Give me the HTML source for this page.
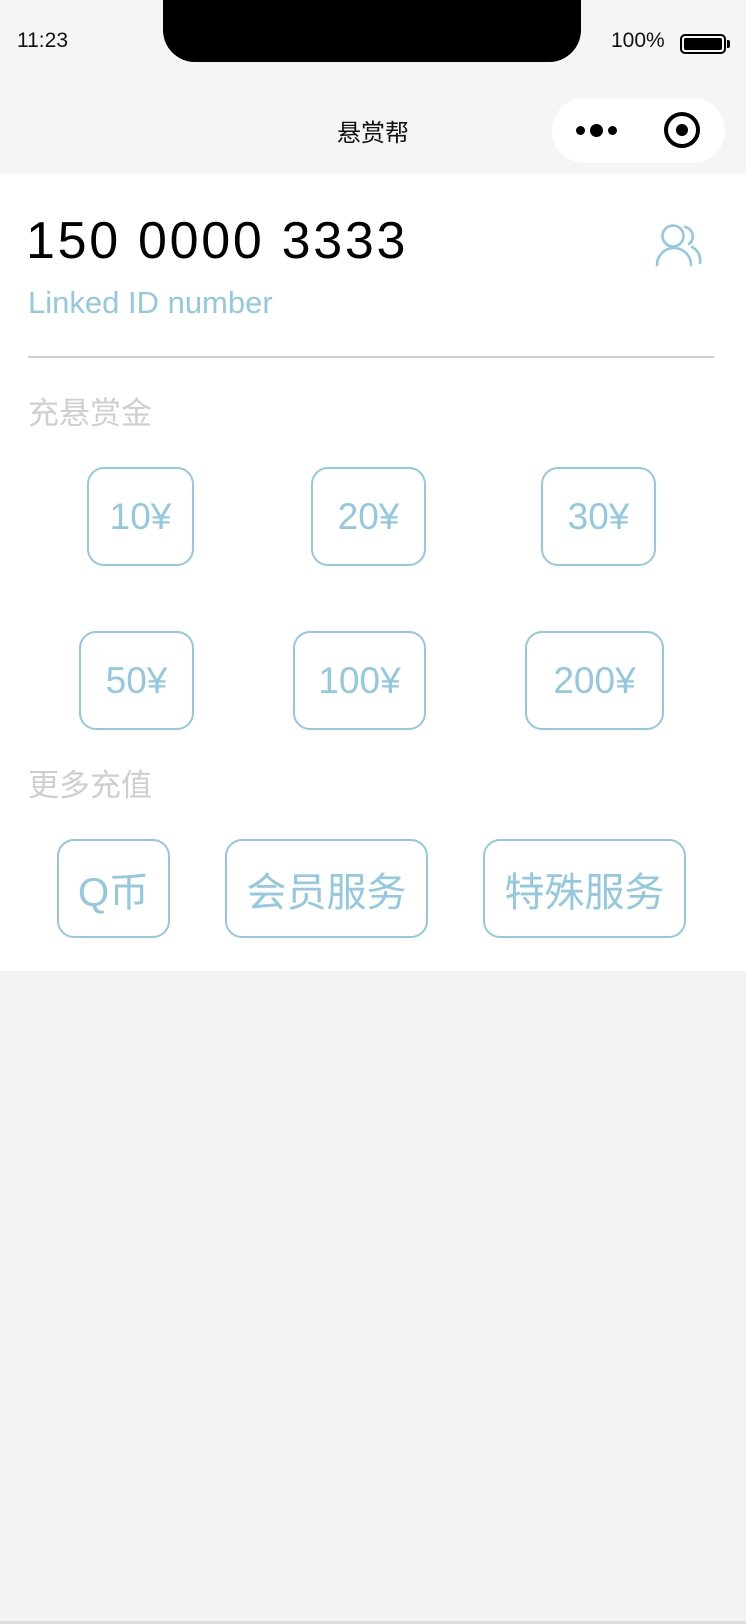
<!DOCTYPE html>
<html><head><meta charset="utf-8"><style>
*{margin:0;padding:0;box-sizing:border-box}
body{width:746px;height:1624px;background:#f3f3f3;font-family:"Liberation Sans","Noto Sans CJK SC",sans-serif;position:relative;overflow:hidden}
.top{position:absolute;left:0;top:0;width:746px;height:174px;background:#f5f5f5}
.notch{position:absolute;left:163px;top:0;width:418px;height:62px;background:#000;border-radius:0 0 32px 32px}
.abs{position:absolute}
.panel{position:absolute;left:0;top:174px;width:746px;height:797px;background:#fff}
.btn{position:absolute;border:2px solid #93c8de;border-radius:17px;color:#93c8de;display:flex;align-items:center;justify-content:center;font-size:37px}
.cj{font-size:40px}
.lbl{position:absolute;left:28px;font-size:31px;color:#cfcfcf;line-height:1}
</style></head><body>
<div class="top"></div>
<div class="notch"></div>
<div class="abs" style="left:17px;top:29px;font-size:21px;color:#111">11:23</div>
<div class="abs" style="left:611px;top:29px;font-size:21px;color:#111">100%</div>
<div class="abs" style="left:680px;top:34px;width:46px;height:20px;border:2px solid #000;border-radius:5px;padding:2px"><div style="width:100%;height:100%;background:#000;border-radius:2px"></div></div>
<div class="abs" style="left:727px;top:40px;width:3px;height:8px;background:#000;border-radius:0 2px 2px 0"></div>
<div class="abs" style="left:0;width:746px;top:113px;text-align:center;font-size:24px;color:#111">悬赏帮</div>
<div class="abs" style="left:552px;top:98px;width:173px;height:65px;background:#fff;border-radius:33px"></div>
<div class="abs" style="left:576px;top:126px;width:9px;height:9px;background:#000;border-radius:50%"></div>
<div class="abs" style="left:590px;top:124px;width:13px;height:13px;background:#000;border-radius:50%"></div>
<div class="abs" style="left:608px;top:126px;width:9px;height:9px;background:#000;border-radius:50%"></div>
<div class="abs" style="left:664px;top:112px;width:36px;height:36px;border:4px solid #000;border-radius:50%"></div>
<div class="abs" style="left:676px;top:124px;width:12px;height:12px;background:#000;border-radius:50%"></div>
<div class="panel"></div>
<div class="abs" style="left:26px;top:213px;font-size:52px;letter-spacing:2.7px;color:#000;line-height:1.1">150 0000 3333</div>
<div class="abs" style="left:28px;top:286px;font-size:31px;color:#93c8de;line-height:1.1">Linked ID number</div>
<svg class="abs" style="left:650px;top:220px" width="60" height="50" viewBox="0 0 60 50" fill="none" stroke="#93c8de" stroke-width="2.6" stroke-linecap="round">
<circle cx="23" cy="16" r="10.5"/>
<path d="M7 45 A17 17 0 0 1 41 45"/>
<path d="M35 7 A9.5 9.5 0 0 1 39 24"/>
<path d="M42 27 A15 15 0 0 1 50 43"/>
</svg>
<div class="abs" style="left:28px;top:356px;width:686px;height:2px;background:#d0d0d0"></div>
<div class="lbl" style="top:398px">充悬赏金</div>
<div class="btn" style="left:87px;top:467px;width:107px;height:99px">10¥</div>
<div class="btn" style="left:311px;top:467px;width:115px;height:99px">20¥</div>
<div class="btn" style="left:541px;top:467px;width:115px;height:99px">30¥</div>
<div class="btn" style="left:79px;top:631px;width:115px;height:99px">50¥</div>
<div class="btn" style="left:293px;top:631px;width:133px;height:99px">100¥</div>
<div class="btn" style="left:525px;top:631px;width:139px;height:99px">200¥</div>
<div class="lbl" style="top:770px">更多充值</div>
<div class="btn cj" style="left:57px;top:839px;width:113px;height:99px">Q币</div>
<div class="btn cj" style="left:225px;top:839px;width:203px;height:99px">会员服务</div>
<div class="btn cj" style="left:483px;top:839px;width:203px;height:99px">特殊服务</div>
<div class="abs" style="left:0;top:1621px;width:746px;height:3px;background:#ddd"></div>
</body></html>
